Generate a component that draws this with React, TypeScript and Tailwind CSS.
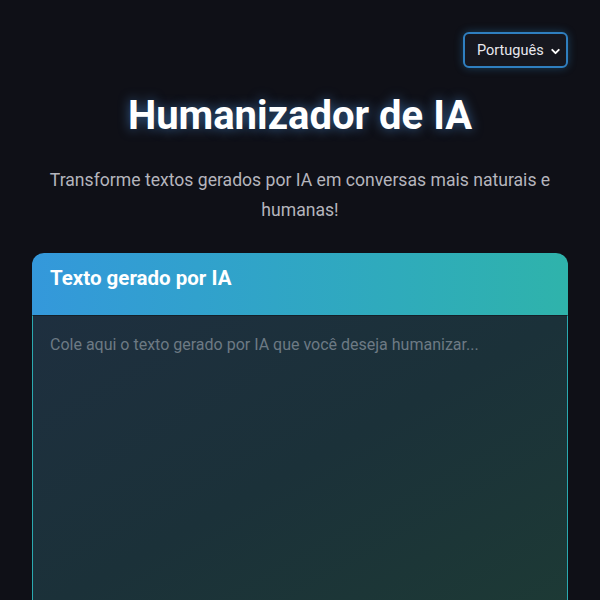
import { ChevronDown } from 'lucide-react';

export default function App() {
  return (
    <div
      className="min-h-screen bg-[#0f1017] px-8 pt-8 text-white"
      style={{ fontFamily: 'Roboto, "Liberation Sans", sans-serif' }}
    >
      <div className="mx-auto max-w-[536px]">
        {/* Language selector */}
        <div className="flex justify-end">
          <div className="flex h-[36px] w-[105px] items-center justify-between rounded-md border-2 border-[#2f7fc0] bg-[#16171f] pl-[12px] pr-[4px] pt-[2px] shadow-[0_0_8px_rgba(52,152,219,0.35)]">
            <span className="text-[14.5px] text-[#e8e8ee]">Português</span>
            <ChevronDown className="h-[13px] w-[13px] text-white" strokeWidth={3.5} />
          </div>
        </div>

        {/* Header */}
        <h1 className="mt-[20px] text-center text-[40px] font-bold leading-[56px] text-white [text-shadow:0_0_12px_rgba(90,170,255,0.55)]">
          Humanizador de IA
        </h1>
        <p className="mx-auto mt-[21px] text-center text-[17.6px] leading-[30px] text-[#b5b5bd]">
          Transforme textos gerados por IA em conversas mais naturais e humanas!
        </p>

        {/* Card */}
        <div className="mt-[28px] overflow-hidden rounded-t-[12px]">
          <div className="h-[62px] bg-gradient-to-r from-[#3498db] to-[#2fb3ab] px-[18px] pt-[12px]">
            <h2 className="text-[20.5px] font-bold leading-[26px] text-white">Texto gerado por IA</h2>
          </div>
          <div className="h-[300px] border-x border-t border-x-[#2aa9b0] border-t-[#152029] bg-gradient-to-br from-[#1e2f3f] via-[#1b3139] to-[#1d3a35] px-[17px] pt-[17px]">
            <p className="text-[16px] text-[#6d7a84]">
              Cole aqui o texto gerado por IA que você deseja humanizar...
            </p>
          </div>
        </div>
      </div>
    </div>
  );
}
